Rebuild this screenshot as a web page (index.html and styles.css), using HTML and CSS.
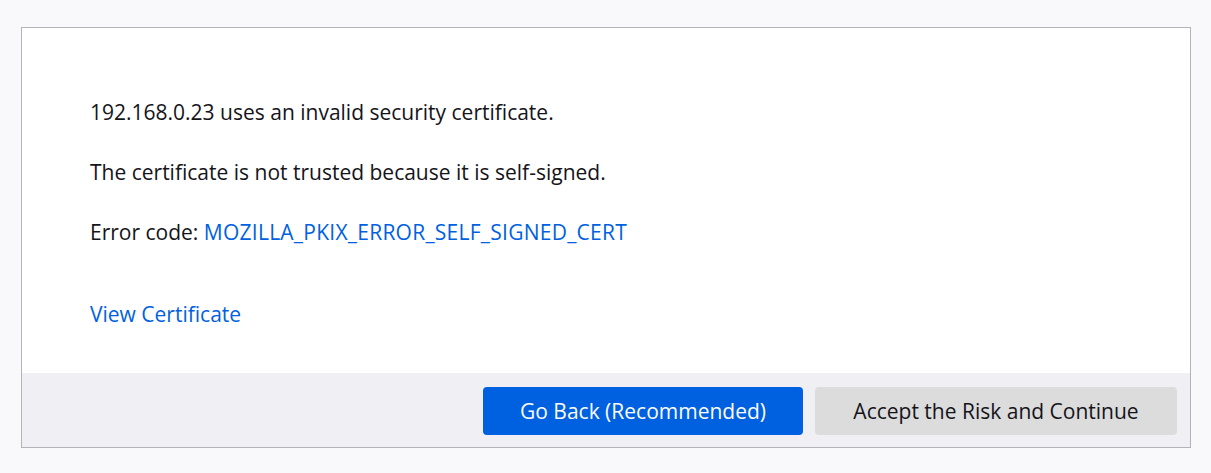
FILE: index.html
```html
<!DOCTYPE html>
<html lang="en">
<head>
<meta charset="utf-8">
<title>Warning: Potential Security Risk Ahead</title>
<link rel="stylesheet" href="styles.css">
</head>
<body>
<div class="panel">
  <div class="content">
    <p class="line">192.168.0.23 uses an invalid security certificate.</p>
    <p class="line">The certificate is not trusted because it is self-signed.</p>
    <p class="line">Error code: <a class="link code" href="#">MOZILLA_PKIX_ERROR_SELF_SIGNED_CERT</a></p>
    <p class="line view"><a class="link" href="#">View Certificate</a></p>
  </div>
  <div class="bar">
    <button class="btn primary">Go Back (Recommended)</button>
    <button class="btn secondary">Accept the Risk and Continue</button>
  </div>
</div>
</body>
</html>
```
FILE: styles.css
```css
html, body {
  margin: 0;
  padding: 0;
  background: #f9f9fb;
}
body {
  padding: 27px 20px 25px 21px;
  font-family: "Open Sans", "Noto Sans", sans-serif;
  font-size: 21px;
  color: #15141a;
}
.panel {
  width: 1168px;
  border: 1px solid #b3b3b8;
  background: #fff;
}
.content {
  padding: 71px 68px 45px 68px;
}
.line {
  margin: 0;
  line-height: 27px;
  height: 27px;
}
.line + .line {
  margin-top: 33px;
}
.line.view {
  margin-top: 55px;
}
.link {
  color: #0061e0;
  text-decoration: none;
}
.code {
  letter-spacing: 0.25px;
}
.bar {
  background: #f0f0f4;
  display: flex;
  justify-content: flex-end;
  gap: 12px;
  padding: 14px 13px 12px 0;
}
.btn {
  font: inherit;
  height: 48px;
  border: none;
  border-radius: 4px;
  padding: 0;
}
.primary {
  width: 320px;
  background: #0061e0;
  color: #fbfbfe;
}
.secondary {
  width: 362px;
  background: #dcdcdc;
  color: #15141a;
}
```
